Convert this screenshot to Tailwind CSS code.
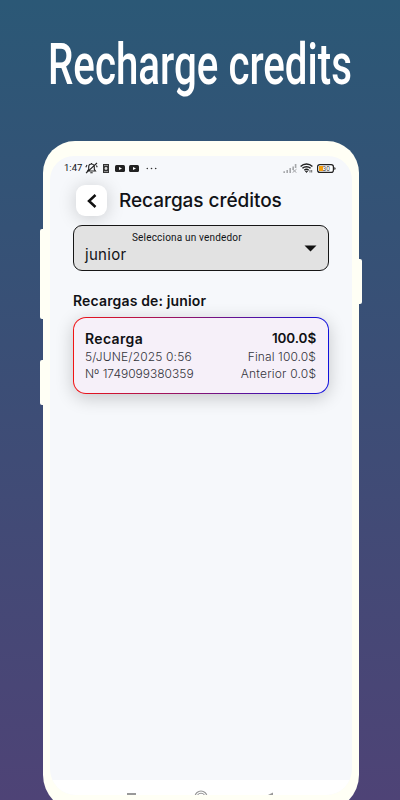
<!DOCTYPE html>
<html lang="es">
<head>
    <meta charset="UTF-8">
    <meta name="viewport" content="width=device-width, initial-scale=1.0">
    <title>Recharge credits</title>
    <script src="https://cdn.jsdelivr.net/npm/@tailwindcss/browser@4"></script>
</head>
<body class="w-[400px] h-[800px] overflow-hidden bg-linear-to-b/srgb from-[#2b5876] to-[#4e4376] font-['Inter',sans-serif] text-[#111216]">
    <!-- Headline -->
    <h1 class="h-[141px]">
        <svg class="block w-[400px] h-[141px] overflow-visible" viewBox="0 0 400 141">
            <text x="48" y="84" textLength="304" lengthAdjust="spacingAndGlyphs" class="fill-white font-['Roboto',sans-serif] text-[58px] font-medium">Recharge credits</text>
        </svg>
    </h1>

    <!-- Phone -->
    <div class="relative ml-[43px] w-[316px] h-[670px] rounded-t-[32px] rounded-b-[36px] bg-[#fffff5] pt-[15px] pl-[7px]">
        <!-- Side buttons -->
        <span class="absolute -left-[3px] top-[88px] w-[4px] h-[90px] rounded-l-[2px] bg-[#fffff5]"></span>
        <span class="absolute -left-[3px] top-[219px] w-[4px] h-[45px] rounded-l-[2px] bg-[#fffff5]"></span>
        <span class="absolute -right-[3px] top-[118px] w-[4px] h-[45px] rounded-r-[2px] bg-[#fffff5]"></span>

        <div class="w-[302px] h-[639px] flex flex-col rounded-t-[24px] rounded-b-[26px] bg-[#f6f8fb] overflow-hidden">
            <!-- Status bar -->
            <div class="h-6 shrink-0 pl-[14px] pr-[16px] flex items-center justify-between">
                <div class="flex items-center">
                    <span class="w-[19px] font-['Roboto',sans-serif] text-[9.5px] leading-none whitespace-nowrap">1:47</span>
                    <svg class="ml-[2px] w-[13px] h-[12px]" viewBox="0 0 13 12" fill="none" stroke="#222" stroke-width="1.1">
                        <path d="M2.5 9h8L9.3 7.3V4.8a2.8 2.8 0 0 0-5.6 0v2.5L2.5 9ZM5.3 10.8h2.4M1 11.2 12 1M.8 5.2 2 3M12.2 5.2 11.4 3.6M6.5 1v1" />
                    </svg>
                    <svg class="ml-[5px] w-[6px] h-[9px]" viewBox="0 0 6 9">
                        <path d="M0 0h6v9H0z" fill="#333" />
                        <path d="M1 1.5h4M1 7.5h4" stroke="#bbb" stroke-width=".7" />
                        <circle cx="3" cy="4.5" r="1.4" fill="#ddd" />
                    </svg>
                    <svg class="ml-[6px] w-[10px] h-[7px]" viewBox="0 0 10 7">
                        <rect width="10" height="7" rx="1.5" fill="#222" />
                        <path d="m4 2 3 1.5L4 5z" fill="#fff" />
                    </svg>
                    <svg class="ml-[4px] w-[10px] h-[7px]" viewBox="0 0 10 7">
                        <rect width="10" height="7" rx="1.5" fill="#222" />
                        <path d="m4 2 3 1.5L4 5z" fill="#fff" />
                    </svg>
                    <svg class="ml-[7px] w-[11px] h-[3px]" viewBox="0 0 11 3" fill="#333">
                        <circle cx="1.3" cy="1.5" r=".8" /><circle cx="5.5" cy="1.5" r=".8" /><circle cx="9.7" cy="1.5" r=".8" />
                    </svg>
                </div>
                <div class="flex items-center">
                    <svg class="w-[14px] h-[9px]" viewBox="0 0 14 9" fill="none" stroke="#a5a7aa" stroke-width="1.6">
                        <path d="M1.2 9V7.3M4.2 9V6M7.2 9V4M10.2 6V2.5M12.6 4V0" />
                        <path d="m9.5 5.2 4 3.5m0-3.5-4 3.5" stroke-width="1" />
                    </svg>
                    <svg class="ml-[3px] w-[13px] h-[10px]" viewBox="0 0 13 10" fill="none" stroke="#222" stroke-width="1.4">
                        <path d="M.6 3.4a8.6 8.6 0 0 1 11.8 0M2.4 5.3a6 6 0 0 1 8.2 0M4.3 7.2a3.2 3.2 0 0 1 4.4 0" />
                        <path d="M5.3 8.2h2.4L6.5 9.6zM10 7v2.5M11.7 7v2.5" fill="#222" stroke-width=".7" />
                    </svg>
                    <svg class="ml-[4px] w-[19px] h-[9px]" viewBox="0 0 19 9">
                        <rect x=".6" y=".6" width="15.8" height="7.8" rx="2.2" fill="#fff" stroke="#222" stroke-width="1.2" />
                        <path d="M2 2h4v5H2z" fill="#f5a00a" />
                        <path d="M17.3 3.2c1.7 0 1.7 2.6 0 2.6z" fill="#222" />
                        <text x="5.6" y="6.9" class="font-['Roboto',sans-serif] text-[6.5px] fill-[#444]">30</text>
                    </svg>
                </div>
            </div>

            <!-- App bar -->
            <div class="h-[45px] shrink-0 pl-[26px] pt-[5px] flex items-start">
                <div class="w-[31px] h-[31px] flex items-center justify-center rounded-[9px] bg-white shadow-[0_2px_18px_rgba(0,0,0,0.18)]">
                    <svg class="w-[10px] h-[14px]" viewBox="0 0 10 14" fill="none" stroke="#111" stroke-width="2.5">
                        <path d="M8.5 1 2 7l6.5 6" />
                    </svg>
                </div>
                <h2 class="ml-[12px] text-[19px] leading-[31px] font-medium tracking-[-0.05px] whitespace-nowrap">Recargas créditos</h2>
            </div>

            <!-- Vendor select -->
            <div class="relative ml-[23px] w-[256px] h-[46px] shrink-0 rounded-[9px] border border-[#161616] bg-[#e2e2e2] pl-[11px] pt-[6px]">
                <p class="ml-[47px] font-['Roboto',sans-serif] text-[10px] leading-[12px] tracking-[0.18px] whitespace-nowrap">Selecciona un vendedor</p>
                <p class="text-[15px] leading-[21px] tracking-[0.3px]">junior</p>
                <svg class="absolute right-[11px] top-[19px] w-[13px] h-[7px]" viewBox="0 0 13 7">
                    <path d="M.5.5h12L6.5 6.5z" fill="#111" />
                </svg>
            </div>

            <h3 class="ml-[23px] mt-[21px] h-[18px] shrink-0 text-[14px] leading-[18px] font-semibold tracking-[0.15px] whitespace-nowrap">Recargas de: junior</h3>

            <!-- Recharge card -->
            <div class="ml-[23px] mt-[7px] w-[256px] h-[77px] shrink-0 rounded-[13px] p-px bg-linear-to-r/srgb from-[#f11414] to-[#1111dd] shadow-[0_4px_18px_rgba(0,0,0,0.2)]">
                <div class="w-full h-full rounded-[12px] bg-[#f6f0f9] pl-[11px] pr-[12px] pt-[12px] text-[12px] leading-[17px] font-light text-[#34343c] whitespace-nowrap">
                    <div class="flex justify-between text-[13.5px] font-semibold text-[#101014]">
                        <span class="text-[14px] tracking-[0.35px]">Recarga</span>
                        <span class="-mr-[0.1px] tracking-[-0.1px]">100.0$</span>
                    </div>
                    <div class="flex justify-between pt-px">
                        <span class="tracking-[0.15px]">5/JUNE/2025 0:56</span>
                        <span class="tracking-[0.1px]">Final 100.0$</span>
                    </div>
                    <div class="flex justify-between">
                        <span>Nº 1749099380359</span>
                        <span class="-mr-[0.2px] tracking-[0.2px]">Anterior 0.0$</span>
                    </div>
                </div>
            </div>

            <!-- Navigation bar -->
            <div class="mt-auto h-[15px] shrink-0 bg-white">
                <svg class="w-[302px] h-[15px]" viewBox="0 0 302 15" fill="none">
                    <path d="M77 13h9v3h-9z" fill="#999" />
                    <circle cx="151" cy="17" r="6" stroke="#999" stroke-width="1.1" />
                    <circle cx="151" cy="17" r="3.8" stroke="#999" stroke-width="1.1" />
                    <path d="M218 15l5-2.5V15z" fill="#999" />
                </svg>
            </div>
        </div>
    </div>
</body>
</html>
